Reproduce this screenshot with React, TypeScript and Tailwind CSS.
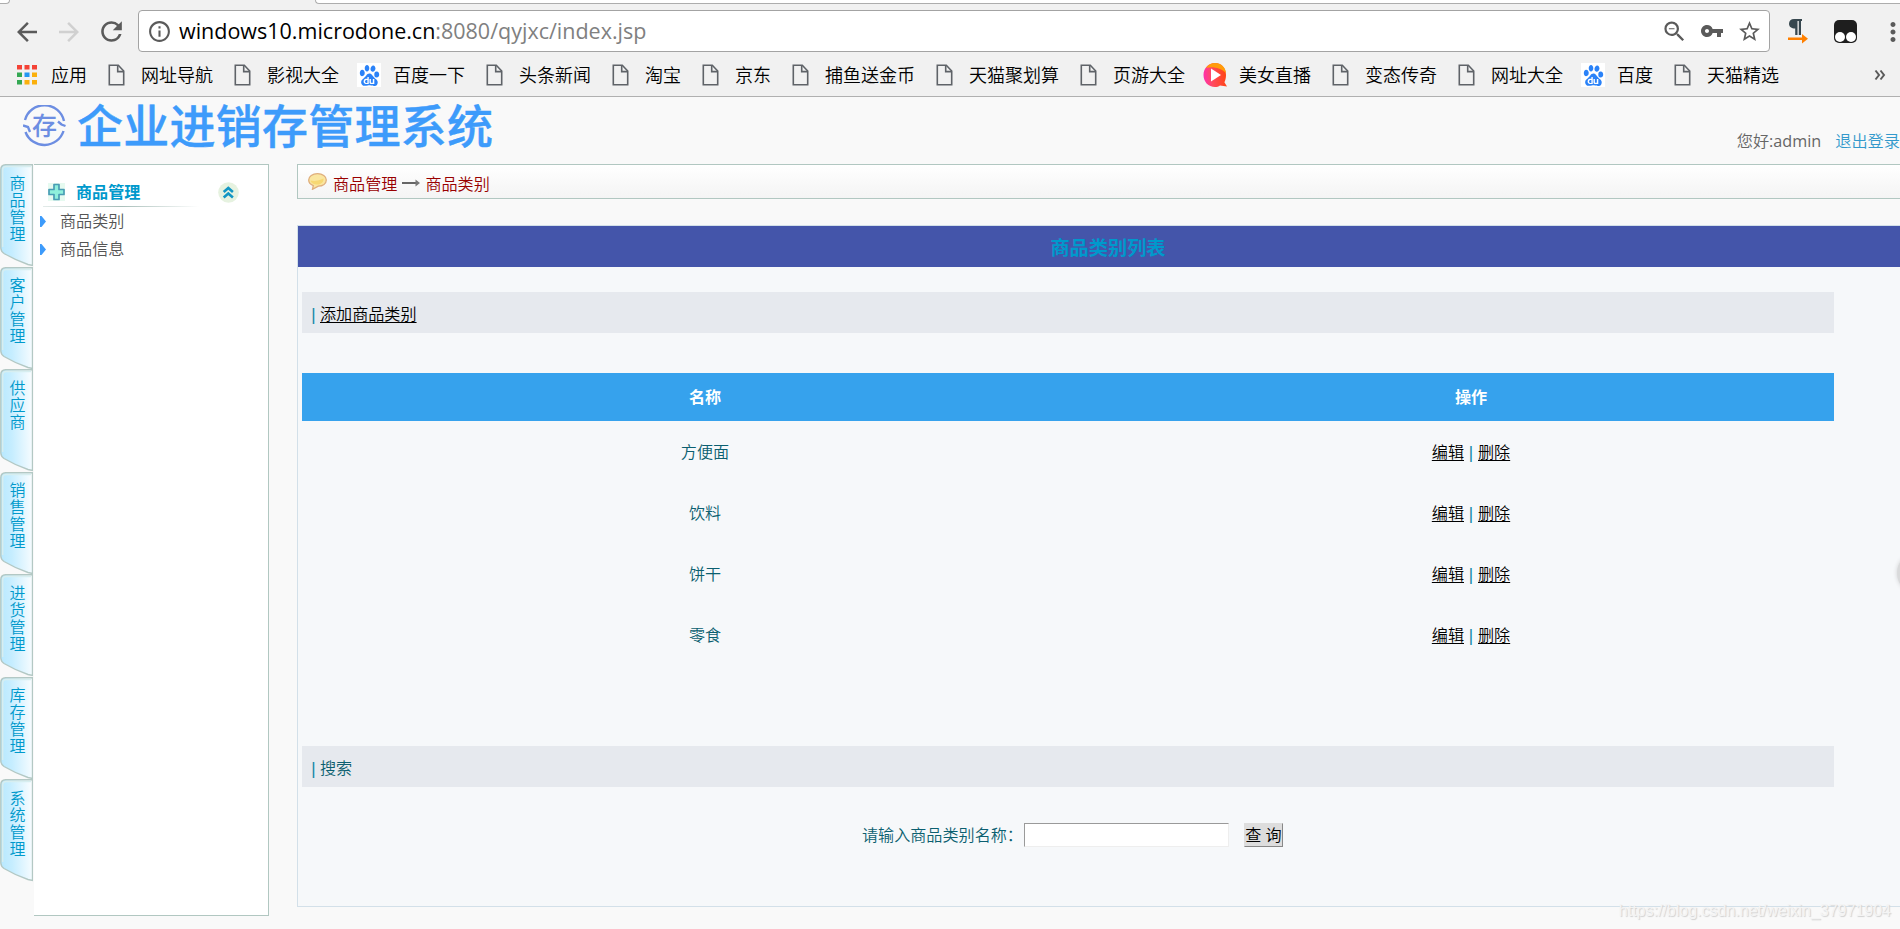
import { Fragment } from 'react';
import {
  MdArrowBack,
  MdArrowForward,
  MdInfoOutline,
  MdMoreVert,
  MdRefresh,
  MdStarBorder,
  MdVpnKey,
  MdZoomOut,
} from 'react-icons/md';
import { SiBaidu } from 'react-icons/si';

type BookmarkIcon = 'apps' | 'page' | 'baidu' | 'live';

const bookmarks: { icon: BookmarkIcon; label: string }[] = [
  { icon: 'apps', label: '应用' },
  { icon: 'page', label: '网址导航' },
  { icon: 'page', label: '影视大全' },
  { icon: 'baidu', label: '百度一下' },
  { icon: 'page', label: '头条新闻' },
  { icon: 'page', label: '淘宝' },
  { icon: 'page', label: '京东' },
  { icon: 'page', label: '捕鱼送金币' },
  { icon: 'page', label: '天猫聚划算' },
  { icon: 'page', label: '页游大全' },
  { icon: 'live', label: '美女直播' },
  { icon: 'page', label: '变态传奇' },
  { icon: 'page', label: '网址大全' },
  { icon: 'baidu', label: '百度' },
  { icon: 'page', label: '天猫精选' },
];

const sideTabs = ['商品管理', '客户管理', '供应商', '销售管理', '进货管理', '库存管理', '系统管理'];
const menuItems = ['商品类别', '商品信息'];
const categories = ['方便面', '饮料', '饼干', '零食'];

const appColors = [
  '#f44336', '#f44336', '#f44336',
  '#34a853', '#2196f3', '#fbb00c',
  '#34a853', '#fbb00c', '#fbb00c',
];

function BookmarkGlyph({ icon }: { icon: BookmarkIcon }) {
  if (icon === 'apps') {
    return (
      <svg width="24" height="24" viewBox="0 0 24 24">
        {appColors.map((c, i) => (
          <rect key={i} x={2 + (i % 3) * 7.5} y={2 + Math.floor(i / 3) * 7.5} width="5" height="4.5" fill={c} />
        ))}
      </svg>
    );
  }
  if (icon === 'baidu') {
    return (
      <span className="w-6 h-6 bg-white flex items-center justify-center">
        <SiBaidu className="w-[21px] h-[21px] text-[#2a82f8]" />
      </span>
    );
  }
  if (icon === 'live') {
    return (
      <svg width="24" height="24" viewBox="0 0 24 24">
        <defs>
          <linearGradient id="live" x1="0" y1="0.6" x2="1" y2="0.5">
            <stop offset="0" stopColor="#ff2fb0" />
            <stop offset="0.35" stopColor="#ff4a60" />
            <stop offset="1" stopColor="#ff4410" />
          </linearGradient>
        </defs>
        <path d="M12 0C18.500 0 23 5 23 12c0 3.500-.8 5.500-1.600 7.300L24 23.500 17 22.500C15.500 23.500 14 24 12 24 5.500 24 .5 19 .5 12S5.500 0 12 0z" fill="url(#live)" />
        <path d="M3 5C5 1.800 8.500 0 12 0c6.500 0 10.500 4.500 11 10C18 5 9 3 3 5z" fill="#ff9c0a" />
        <path d="M8 5.500v13L18 12z" fill="#fff" />
      </svg>
    );
  }
  return (
    <svg width="24" height="24" viewBox="0 0 24 24" fill="none" stroke="#5f6368" strokeWidth="1.600">
      <path d="M4.300 2.300h9L18.700 8v13.700H4.300z" />
      <path d="M12.700 2.300V8.600h6" />
    </svg>
  );
}

function BrowserChrome() {
  return (
    <div className="h-[97px] bg-[#f1f1f1] border-b border-[#b0b0b0] flex flex-col">
      {/* Bottom of the tab strip */}
      <div className="h-1 flex justify-between">
        <div className="w-2.5 h-1 bg-white border-b border-r border-[#adadad] rounded-br-sm" />
        <div className="w-[1585px] h-1 bg-white border-b border-l border-[#adadad] rounded-bl-sm" />
      </div>

      {/* Address row */}
      <div className="h-[55px] flex items-center">
        <div className="w-[138px] flex items-center text-[#5a5a5a] pl-3">
          <MdArrowBack className="w-[30px] h-[30px]" />
          <MdArrowForward className="w-[30px] h-[30px] ml-3 text-[#d0d0d0]" />
          <MdRefresh className="w-[31px] h-[31px] ml-3" />
        </div>
        <div className="w-[1632px] h-[42px] mb-[1px] bg-white border border-[#a3a3a3] rounded-[4px] flex items-center pl-2">
          <MdInfoOutline className="w-[25px] h-[25px] text-[#5a5a5a]" />
          <div className="ml-[7px] text-[21.500px] leading-[30px] whitespace-nowrap">
            <span className="text-black">windows10.microdone.cn</span>
            <span className="text-[#808080]">:8080/qyjxc/index.jsp</span>
          </div>
          <div className="ml-auto flex items-center text-[#5a5a5a] pr-[7px]">
            <MdZoomOut className="w-[27px] h-[27px]" />
            <MdVpnKey className="w-6 h-6 ml-[12px]" />
            <MdStarBorder className="w-[25px] h-[25px] ml-[13px]" />
          </div>
        </div>
        <svg className="ml-[18px]" width="20" height="26" viewBox="0 0 20 26">
          <path d="M6 0h8v2h-1v14h-2.200V2H9.500v14H7.200V9.500C3.500 9.500 1 8 1 4.800S3 0 6 0z" fill="#37474f" />
          <path d="M0 18.500h14V15l6 4.700-6 4.800v-3.500H0z" fill="#ff8000" />
        </svg>
        <svg className="ml-[26px]" width="23" height="24" viewBox="0 0 23 24">
          <rect x="0" y="0" width="23" height="23" rx="5" fill="#1e1e1e" />
          <circle cx="6" cy="17" r="5" fill="#fff" />
          <circle cx="17" cy="17" r="5" fill="#fff" />
        </svg>
        <MdMoreVert className="w-[30px] h-[30px] ml-[21px] -mr-4 shrink-0 text-[#5a5a5a]" />
      </div>

      {/* Bookmarks bar */}
      <div className="h-[32px] flex items-center gap-[18px] pl-[15px] text-[18px] leading-[24px] text-black font-[350]">
        {bookmarks.map((b, i) => (
          <div key={i} className="flex items-center gap-3 whitespace-nowrap">
            <BookmarkGlyph icon={b.icon} />
            <span>{b.label}</span>
          </div>
        ))}
        <svg className="ml-auto mr-[14px]" width="12" height="12" viewBox="0 0 12 12" fill="none" stroke="#5a5a5a" strokeWidth="2">
          <path d="M1.500 1.500L5 6l-3.500 4.500M6.500 1.500L10 6l-3.500 4.500" />
        </svg>
      </div>
    </div>
  );
}

function Header() {
  return (
    <div className="h-[67px] flex justify-between">
      <div className="flex items-center h-[58px] pl-[23px]">
        <svg width="43" height="42" viewBox="0 0 43 42" fill="none" stroke="#6d8ee2" strokeWidth="2.400">
          <path d="M2 15A20 19.500 0 0 1 41 16" />
          <path d="M40.500 26A20 19.500 0 0 1 2.500 27" />
          <path d="M0 20.500l5 1.500 2 5M42.500 21l-4-1.500-3.500-3" />
          <text
            x="21.500"
            y="30"
            textAnchor="middle"
            fontSize="25"
            fontWeight="500"
            fill="#6d8ee2"
            stroke="none"
            fontFamily="Noto Sans CJK SC, sans-serif"
          >
            存
          </text>
        </svg>
        <h1 className="ml-[11px] text-[46px] leading-[58px] tracking-[0.250px] font-medium text-[#3d9bfb] [-webkit-text-stroke:0.4px_#3d9bfb] whitespace-nowrap -mt-0.5">
          企业进销存管理系统
        </h1>
      </div>
      <div className="flex items-center gap-[14px] pt-[20px] text-[16.200px] leading-[24px] whitespace-nowrap font-[350]">
        <span className="text-[#666666]">您好<span className="font-normal">:admin</span></span>
        <a href="#" className="text-[#3399cc]">退出登录</a>
      </div>
    </div>
  );
}

function SideTab({ label }: { label: string }) {
  return (
    <div className="w-[33px] h-[102.500px] grid">
      <svg className="col-start-1 row-start-1" width="33" height="102.500" viewBox="0 0 33 102.500">
        <defs>
          <linearGradient id="tab" x1="0" y1="0.3" x2="1" y2="0.22">
            <stop offset="0" stopColor="#b9e9ff" />
            <stop offset="0.3" stopColor="#c5edff" />
            <stop offset="1" stopColor="#fafdff" />
          </linearGradient>
        </defs>
        <path
          d="M32.500 .7H5.500Q.8 1 .8 5.500V84Q1 87.500 4 89.500Q15 96 28 100.500L32.500 101.500z"
          fill="url(#tab)"
          stroke="#b3c8c4"
          strokeWidth="1.400"
        />
        <path d="M31 2.500H6Q2.700 2.800 2.700 6V83" fill="none" stroke="#d7eef0" strokeWidth="1.500" />
      </svg>
      <div className="col-start-1 row-start-1 w-4 ml-[9.500px] mt-[10.500px] text-[16px] leading-[17px] text-[#0099cc] break-all font-[350]">
        {label}
      </div>
    </div>
  );
}

function Sidebar() {
  return (
    <div className="flex w-[269px] h-[752px]">
      <div className="w-[34px] flex flex-col">
        {sideTabs.map((label) => (
          <SideTab key={label} label={label} />
        ))}
      </div>
      <div className="w-[235px] h-[752px] bg-white border-t border-r border-b border-[#b1c7c1]">
        <div className="flex items-center h-[41px] pt-[13px] pl-[14px] pr-[29px]">
          <svg width="17" height="18" viewBox="0 0 17 18">
            <rect width="17" height="18" fill="#e6faf0" />
            <path d="M6 1.500h5v5h5v5h-5v5H6v-5H1v-5h5z" fill="#8ff0dc" stroke="#4a9db5" strokeWidth="1.700" strokeLinejoin="round" />
          </svg>
          <h2 className="ml-[11px] -mt-px text-[16.100px] leading-[24px] font-bold text-[#0099cc]">商品管理</h2>
          <svg className="ml-auto" width="21" height="21" viewBox="0 0 21 21" fill="none" stroke="#1296c4" strokeWidth="2.600">
            <circle cx="10.500" cy="10.500" r="10.300" fill="#e6f2e0" stroke="none" />
            <path d="M5.700 10l4.600-4 4.600 4M5.700 15.500l4.600-4 4.600 4" />
          </svg>
        </div>
        <div className="h-px w-[156px] ml-[9px] bg-linear-to-r from-[#e3ebe9] via-[#a9bfba] to-white" />
        <ul className="text-[16.100px] leading-[28px] text-[#555555] font-[350]">
          {menuItems.map((item) => (
            <li key={item} className="h-[28px] flex items-center pl-[6px]">
              <svg width="6" height="11" viewBox="0 0 6 11">
                <path d="M0 0l1.500 0L6 5.500 1.500 11H0z" fill="#3d9bfb" />
              </svg>
              <span className="ml-[14px]">{item}</span>
            </li>
          ))}
        </ul>
      </div>
    </div>
  );
}

function Breadcrumb() {
  return (
    <div className="h-[35px] border border-r-0 border-[#b1c7c1] bg-linear-to-b from-white to-[#f4f4f4] flex items-center pl-[10px] pt-[5px] text-[16.100px] leading-[24px] text-[#990000] font-[350]">
      <svg className="-mt-[6px]" width="19" height="17" viewBox="0 0 19 17">
        <path
          d="M9.500 .7C14.500 .7 18.300 3.400 18.300 7s-3.500 6-8 6.200L4.500 16.300l.8-3.700C2.500 11.500 .7 9.500 .7 7 .7 3.400 4.500 .7 9.500 .7z"
          fill="#fae6a0"
          stroke="#dfae7c"
          strokeWidth="1.300"
        />
        <path d="M2.500 7.500Q9 9 15.500 5.500C16 9 13 11.500 9.500 11.500S3 10 2.500 7.500z" fill="#f7d873" />
      </svg>
      <span className="ml-[6px]">商品管理</span>
      <svg className="mx-[5px] -mt-[2px]" width="18" height="8" viewBox="0 0 18 8">
        <path d="M0 4h15" stroke="#555" strokeWidth="1.800" />
        <path d="M13.500 .5L18 4l-4.500 3.500z" fill="#777" />
      </svg>
      <span>商品类别</span>
    </div>
  );
}

function CategoryPanel() {
  return (
    <div className="w-[1621px] h-[682px] mt-[26px] border border-[#d3e0e9] bg-[#f6f8fa] text-[16.100px] leading-[24px] text-[#0b5f70] font-[350]">
      <h2 className="h-[41px] pt-[2px] pl-px bg-[#4455aa] flex items-center justify-center text-[19.200px] font-bold text-[#0099cc]">
        商品类别列表
      </h2>

      <div className="w-[1532px] ml-1 mt-[25px]">
        <div className="h-[41px] bg-[#e6e9ee] flex items-center pl-[7px] pt-[2px]">
          <span className="text-[#1289a8] w-[11px] font-semibold">|</span>
          <a href="#" className="text-black underline underline-offset-2">添加商品类别</a>
        </div>

        <div className="grid grid-cols-[806px_726px] mt-10 text-center">
          <div className="h-12 leading-[48px] bg-[#36a2ed] text-white font-bold">名称</div>
          <div className="h-12 leading-[48px] bg-[#36a2ed] text-white font-bold">操作</div>
          {categories.map((name) => (
            <Fragment key={name}>
              <div className="h-[61px] leading-[62px]">{name}</div>
              <div className="h-[61px] flex items-center justify-center gap-[5px] pt-px">
                <a href="#" className="text-black underline underline-offset-2">编辑</a>
                <span className="text-[#1289a8] w-1 flex justify-center font-semibold">|</span>
                <a href="#" className="text-black underline underline-offset-2">删除</a>
              </div>
            </Fragment>
          ))}
        </div>

        <div className="h-[41px] mt-[81px] bg-[#e6e9ee] flex items-center pl-[7px] pt-[2px]">
          <span className="text-[#1289a8] w-[11px] font-semibold">|</span>
          <span>搜索</span>
        </div>

        <form className="flex items-center mt-[35px] ml-[560px]" onSubmit={(e) => e.preventDefault()}>
          <label htmlFor="category" className="w-[162px] whitespace-nowrap pt-px">请输入商品类别名称：</label>
          <input
            id="category"
            type="text"
            className="w-[205px] h-6 bg-white border border-t-[#9a9a9a] border-l-[#9a9a9a] border-r-[#eeeeee] border-b-[#eeeeee]"
          />
          <button
            type="submit"
            className="ml-[15px] w-[39px] h-6 bg-[#dddddd] border border-t-[#dddddd] border-l-[#dddddd] border-r-[#888888] border-b-[#888888] text-black leading-[22px] whitespace-nowrap flex justify-center"
          >
            查 询
          </button>
        </form>
      </div>
    </div>
  );
}

export default function App() {
  return (
    <div className="relative w-[1900px] h-[929px] overflow-hidden bg-[#f9f9f9] font-['Open_Sans','Noto_Sans_CJK_SC',sans-serif]">
      <BrowserChrome />
      <Header />
      <div className="flex">
        <Sidebar />
        <div className="w-[1603px] ml-7">
          <Breadcrumb />
          <CategoryPanel />
        </div>
      </div>

      {/* Floating handle on the right edge */}
      <div className="absolute left-[1897px] top-[553px] w-10 h-10 rounded-full bg-[#d9dadb] shadow-[0_0_4px_#cfd0d1]" />

      <div className="absolute right-[9px] bottom-[7px] font-['Liberation_Sans',sans-serif] text-[16px] leading-[22px] text-[#f4f4f4] [text-shadow:1px_1px_1px_#d0d0d0]">
        https://blog.csdn.net/weixin_37971904
      </div>
    </div>
  );
}
